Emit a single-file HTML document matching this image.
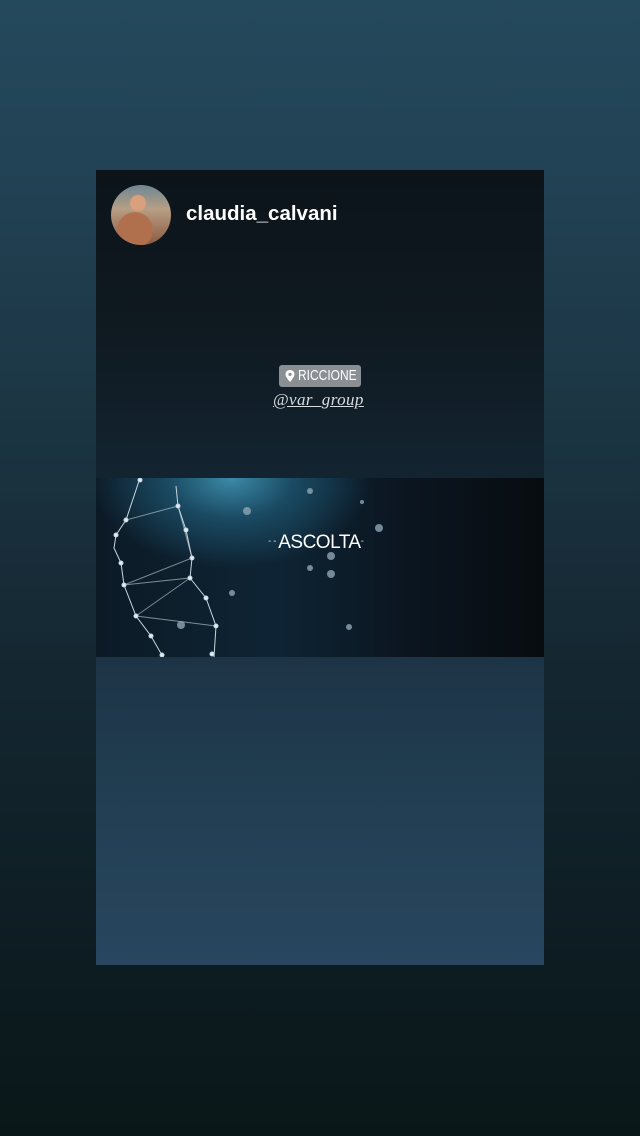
<!DOCTYPE html>
<html><head><meta charset="utf-8"><style>
html,body{margin:0;padding:0}
body{width:640px;height:1136px;position:relative;overflow:hidden;
background:linear-gradient(180deg,#25495c 0%,#224255 15%,#1c3644 35%,#142630 60%,#0d1c21 85%,#0a1719 100%);font-family:"Liberation Sans",sans-serif}
.card{position:absolute;left:96px;top:170px;width:448px;height:795px;overflow:hidden}
.top{position:absolute;left:0;top:0;width:448px;height:308px;background:linear-gradient(180deg,#0c141a 0%,#0f1920 50%,#132431 100%)}
.av{position:absolute;left:15px;top:15px;width:60px;height:60px;border-radius:50%;overflow:hidden;
background:radial-gradient(circle at 45% 30%,#d9a07e 0 14%,rgba(0,0,0,0) 16%),radial-gradient(circle at 40% 75%,#b0704e 0 30%,rgba(0,0,0,0) 32%),linear-gradient(180deg,#6f8794 0%,#b79e84 40%,#8a5a40 100%)}
.name{position:absolute;left:90px;top:32px;color:#fff;font-weight:bold;font-size:20.5px}
.loc{position:absolute;left:183px;top:195px;width:82px;height:22px;background:#8a8f93;border-radius:3px;color:#fff;font-size:15px;line-height:22px}
.tag{position:absolute;left:177px;top:220px;color:#d8dde0;font-family:"Liberation Serif",serif;font-style:italic;font-size:17px;text-decoration:underline;letter-spacing:0.4px}
.vid{position:absolute;left:0;top:308px;width:448px;height:179px;
background:radial-gradient(ellipse 140px 90px at 135px 0px,#3c8aa8 0%,#1a4a62 45%,rgba(10,20,30,0) 100%),linear-gradient(90deg,#0c1a26 0%,#0e2434 40%,#0b1520 70%,#070c10 100%)}
.bot{position:absolute;left:0;top:487px;width:448px;height:308px;background:linear-gradient(180deg,#1d3446 0%,#223f53 50%,#28465f 100%)}
.asc{position:absolute;left:172px;top:54px;color:#fff;font-size:19px;letter-spacing:-0.5px}
</style></head><body>
<div class="card">
<div class="top">
<div class="av"></div>
<div class="name">claudia_calvani</div>
<div class="loc"><svg width="10" height="12" viewBox="0 0 10 12" style="position:absolute;left:6px;top:5px"><path d="M5 0C2.2 0 0.5 2 0.5 4.3 0.5 7 5 12 5 12S9.5 7 9.5 4.3C9.5 2 7.8 0 5 0Z" fill="#fff"/><circle cx="5" cy="4.4" r="1.6" fill="#8a8f93"/></svg><span style="position:absolute;left:19px;transform:scaleX(0.8);transform-origin:left">RICCIONE</span></div>
<div class="tag">@var_group</div>
</div>
<div class="vid">
<svg width="448" height="179" style="position:absolute;left:0;top:0" stroke="#c8d6e0" stroke-width="1" fill="#e0ecf4">
<polyline fill="none" points="44,0 30,42 20,57 18,70 25,85 28,107 40,138 55,158 67,179"/>
<polyline fill="none" points="80,8 82,28 90,52 96,80 94,100 110,120 120,148 118,179"/>
<polyline fill="none" opacity=".6" points="30,42 82,28 96,80 28,107 94,100 40,138 120,148"/>
<circle cx="44" cy="2" r="2"/><circle cx="30" cy="42" r="2"/><circle cx="20" cy="57" r="2"/><circle cx="25" cy="85" r="2"/><circle cx="28" cy="107" r="2"/><circle cx="40" cy="138" r="2"/><circle cx="55" cy="158" r="2"/><circle cx="66" cy="177" r="2"/>
<circle cx="82" cy="28" r="2"/><circle cx="90" cy="52" r="2"/><circle cx="96" cy="80" r="2"/><circle cx="94" cy="100" r="2"/><circle cx="110" cy="120" r="2"/><circle cx="120" cy="148" r="2"/><circle cx="116" cy="176" r="2"/>
<g stroke="none" fill="#8fa6b4" opacity=".8"><circle cx="151" cy="33" r="4"/><circle cx="214" cy="13" r="3"/><circle cx="283" cy="50" r="4"/><circle cx="235" cy="78" r="4"/><circle cx="235" cy="96" r="4"/><circle cx="214" cy="90" r="3"/><circle cx="136" cy="115" r="3"/><circle cx="85" cy="147" r="4"/><circle cx="253" cy="149" r="3"/><circle cx="266" cy="24" r="2"/></g>
</svg>
<div class="asc"><span style="font-size:10px;vertical-align:4px;color:#ccd">- - </span>ASCOLTA<span style="font-size:10px;vertical-align:4px;color:#ccd">-</span></div>
</div>
<div class="bot"></div>
</div>
</body></html>
